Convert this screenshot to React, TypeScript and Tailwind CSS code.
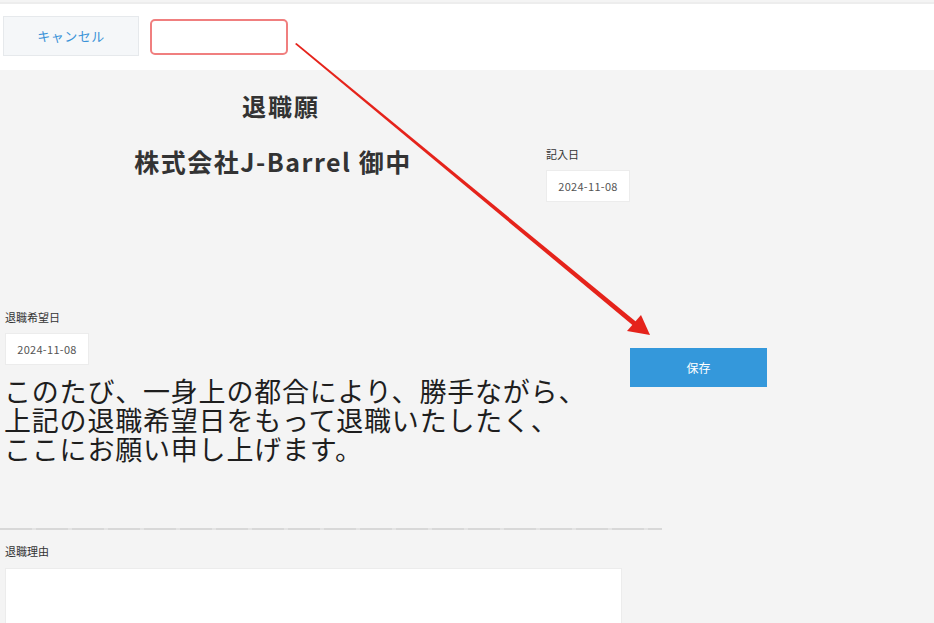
import React from 'react';

const SANS = '"Noto Sans CJK JP", "Noto Sans", sans-serif';

function Field({ label, value, className = '' }: { label: string; value: string; className?: string }) {
  return (
    <div className={className}>
      <p className="text-[11px] leading-[16px] text-[#333]">{label}</p>
      <div className="mt-[8px] w-[84px] h-[32px] bg-white border border-[#ececec] flex items-center justify-center text-[11px] text-[#555] tracking-[0.3px]">
        {value}
      </div>
    </div>
  );
}

function Arrow() {
  return (
    <svg className="absolute inset-0 pointer-events-none" width="934" height="623" viewBox="0 0 934 623">
      <polygon points="295,44 296.5,43 640,325 636,328" fill="#e5231b" />
      <polygon points="650,335 627,331 641,315" fill="#e5231b" />
    </svg>
  );
}

export default function App() {
  return (
    <div className="relative w-[934px] h-[623px] overflow-hidden bg-[#f4f4f4]" style={{ fontFamily: SANS }}>
      <header className="h-[68px] bg-white border-t-[2px] border-[#ededed] mt-[2px] flex items-start gap-[11px] pl-[3px] pt-[12px]">
        <button className="w-[136px] h-[40px] bg-[#f5f7f9] border border-[#e6e9ec] text-[13px] text-[#3b93d8] tracking-[0.5px]">
          キャンセル
        </button>
        <div className="mt-[3px] w-[138px] h-[36px] bg-white border-2 border-[#f07f7f] rounded-[5px]" />
      </header>

      <section className="flex h-[239px]">
        <div className="w-[546px] text-center text-[#333] font-bold">
          <h1 className="mt-[21px] pl-[16px] text-[24px] leading-[30px] tracking-[2px]">退職願</h1>
          <h2 className="mt-[24px] text-[25px] leading-[32px] tracking-[1.5px]">株式会社J-Barrel 御中</h2>
        </div>
        <Field label="記入日" value="2024-11-08" className="mt-[76px]" />
      </section>

      <section className="flex">
        <div className="w-[620px] pl-[5px]">
          <Field label="退職希望日" value="2024-11-08" />
          <p
            className="mt-[14px] text-[27px] leading-[29px] tracking-[0.8px] text-[#1e1e1e] -ml-[1px]"
            style={{ fontFamily: '"Liberation Serif", "Noto Sans CJK JP", serif' }}
          >
            このたび、一身上の都合により、勝手ながら、
            <br />
            上記の退職希望日をもって退職いたしたく、
            <br />
            ここにお願い申し上げます。
          </p>
        </div>
        <button className="ml-[10px] mt-[39px] w-[137px] h-[39px] bg-[#3498db] text-white text-[12px] self-start">
          保存
        </button>
      </section>

      <div className="mt-[62px] w-[662px] h-[2px] bg-[repeating-linear-gradient(90deg,#d8d8d8_0_32px,#e4e4e4_32px_36px)]" />
      <div className="pl-[5px]">
        <p className="mt-[13px] text-[11px] leading-[16px] text-[#333]">退職理由</p>
        <div className="mt-[9px] w-[617px] h-[80px] bg-white border border-[#ececec]" />
      </div>

      <Arrow />
    </div>
  );
}
